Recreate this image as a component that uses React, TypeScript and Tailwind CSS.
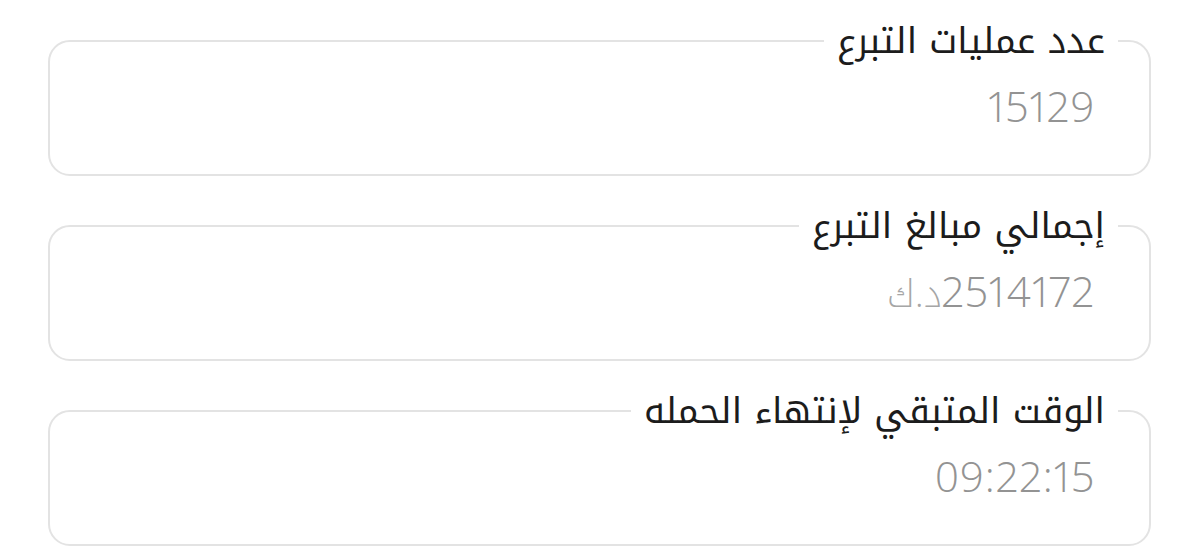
const stats = [
  { label: 'عدد عمليات التبرع', value: '15129', unit: '' },
  { label: 'إجمالي مبالغ التبرع', value: '2514172', unit: 'د.ك' },
  { label: 'الوقت المتبقي لإنتهاء الحمله', value: '09:22:15', unit: '' },
]

function StatBox({ label, value, unit }: { label: string; value: string; unit: string }) {
  return (
    <fieldset className="border-2 border-[#e3e3e3] rounded-[22px] h-[153px]">
      <legend className="mr-[31px] px-[13px] text-[36px] leading-[36px] text-[#1c1c1c] font-['Noto_Kufi_Arabic','Noto_Sans_Arabic','DejaVu_Sans',sans-serif]">
        {label}
      </legend>
      <div className="flex items-baseline mt-[23px] pr-[54px] text-[#939393]">
        <span dir="ltr" className="text-[42px] leading-[48px] font-light tracking-[1px] proportional-nums font-['Open_Sans',sans-serif]">
          {value}
        </span>
        {unit && (
          <span className="text-[38px] leading-[48px] font-extralight text-[#a6a6a6] ml-[2px] font-['Noto_Kufi_Arabic','Noto_Sans_Arabic','DejaVu_Sans',sans-serif]">
            {unit}
          </span>
        )}
      </div>
    </fieldset>
  )
}

export default function App() {
  return (
    <div dir="rtl" className="w-[1200px] h-[560px] bg-white pt-[23px] pl-[48px] pr-[49px] flex flex-col gap-[32px]">
      {stats.map((s) => (
        <StatBox key={s.label} {...s} />
      ))}
    </div>
  )
}
